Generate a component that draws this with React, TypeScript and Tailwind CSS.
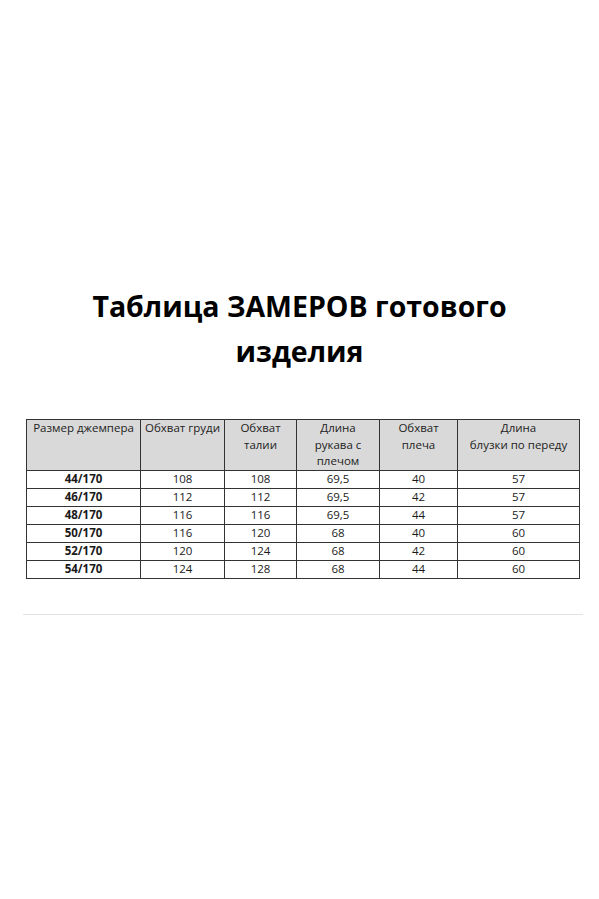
const columns = [
  { title: "Размер джемпера", width: "w-[114px]" },
  { title: "Обхват груди", width: "w-[84px]" },
  { title: "Обхват талии", width: "w-[72px]" },
  { title: "Длина рукава с плечом", width: "w-[83px]" },
  { title: "Обхват плеча", width: "w-[78px]" },
  { title: "Длина блузки по переду", width: "w-[122px]" },
];

const headerLines = [
  ["Размер джемпера"],
  ["Обхват груди"],
  ["Обхват", "талии"],
  ["Длина", "рукава с", "плечом"],
  ["Обхват", "плеча"],
  ["Длина", "блузки по переду"],
];

const rows = [
  ["44/170", "108", "108", "69,5", "40", "57"],
  ["46/170", "112", "112", "69,5", "42", "57"],
  ["48/170", "116", "116", "69,5", "44", "57"],
  ["50/170", "116", "120", "68", "40", "60"],
  ["52/170", "120", "124", "68", "42", "60"],
  ["54/170", "124", "128", "68", "44", "60"],
];

export default function App() {
  return (
    <div className="flex h-[899px] w-[599px] flex-col bg-white font-['Open_Sans',sans-serif] text-black">
      <h1 className="mt-[284px] text-center text-[28.5px] font-bold leading-[45px]">
        Таблица ЗАМЕРОВ готового
        <br />
        изделия
      </h1>

      <table className="ml-[26px] mt-[45px] w-[553px] table-fixed border-collapse border border-[#333] text-[11.5px] leading-[16.5px] text-[#1a1a1a]">
        <colgroup>
          {columns.map((col) => (
            <col key={col.title} className={col.width} />
          ))}
        </colgroup>
        <thead>
          <tr className="h-[48px] bg-[#d9d9d9]">
            {headerLines.map((lines, i) => (
              <th
                key={i}
                className="border border-[#333] px-1 pt-0 align-top font-normal text-[#222]"
              >
                {lines.map((line) => (
                  <div key={line}>{line}</div>
                ))}
              </th>
            ))}
          </tr>
        </thead>
        <tbody>
          {rows.map((row) => (
            <tr key={row[0]} className="h-[18px]">
              {row.map((cell, i) => (
                <td
                  key={i}
                  className={
                    i === 0
                      ? "border border-[#333] p-0 text-center font-bold"
                      : "border border-[#333] p-0 text-center"
                  }
                >
                  {cell}
                </td>
              ))}
            </tr>
          ))}
        </tbody>
      </table>

      <div className="ml-[23px] mt-[35px] h-px w-[560px] bg-[#e3e3e3]" />
    </div>
  );
}
